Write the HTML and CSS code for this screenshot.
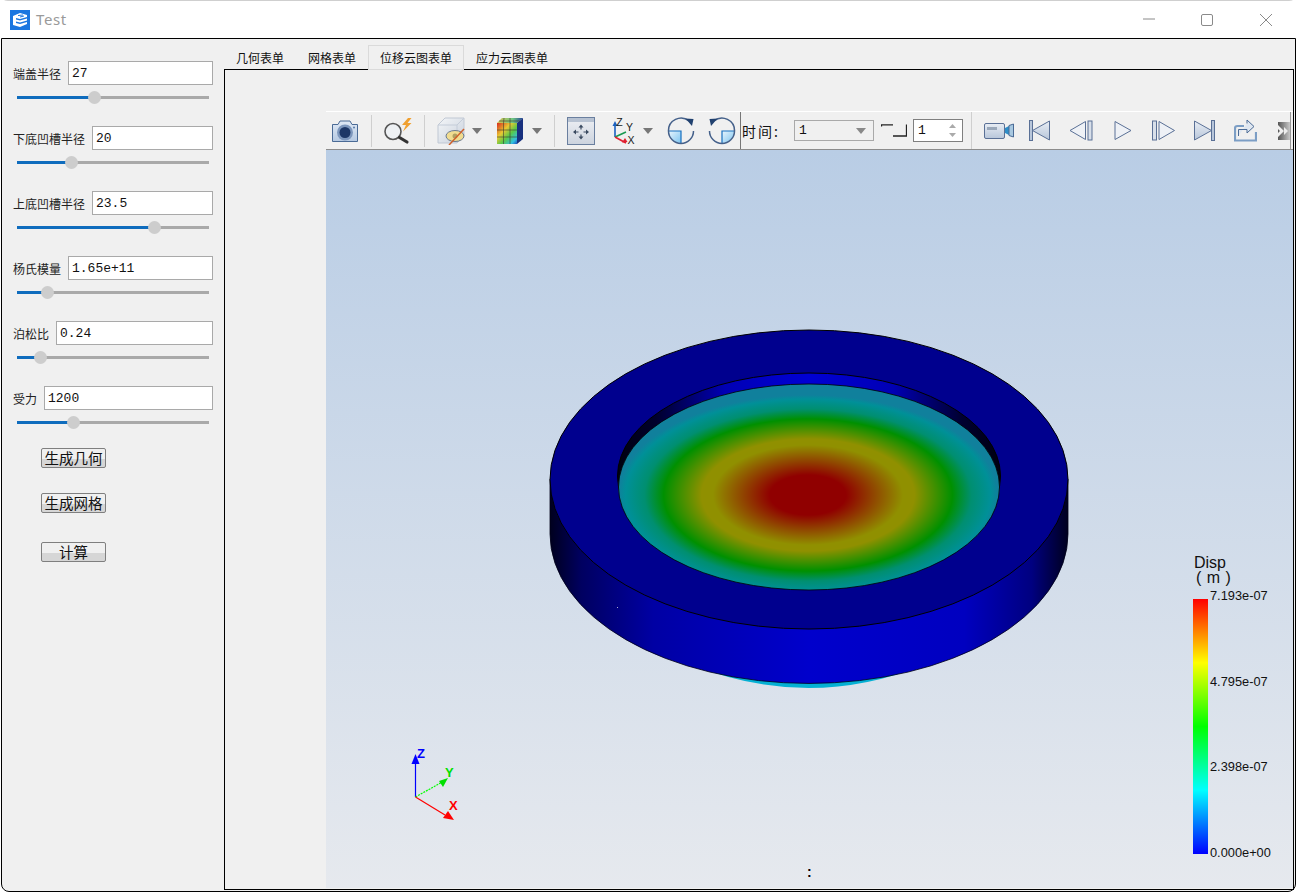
FILE: index.html
```html
<!DOCTYPE html>
<html lang="zh">
<head>
<meta charset="utf-8">
<title>Test</title>
<link rel="stylesheet" href="styles.css">
</head>
<body>
<div class="window">
  <header class="titlebar">
    <svg class="app-icon" width="20" height="20" viewBox="0 0 20 20">
      <rect width="20" height="20" fill="#1a76e0"/>
      <path d="M3 6 L10 3 L17 5 L17 7 L10 9 L6 8 L6 9.5 L10 10.5 L17 8.5 L17 10.5 L10 12.5 L6 11.5 L6 13 L10 14 L17 12 L17 14 L10 17 L3 15 Z" fill="#fff"/>
      <path d="M8 5.5 L13 5 M10 7 L14 6" stroke="#1a76e0" stroke-width="1"/>
    </svg>
    <span class="app-title">Test</span>
    <div class="win-controls">
      <svg class="win-min" width="12" height="2" viewBox="0 0 12 2"><path d="M0 1H12" stroke="#8a8a8a"/></svg>
      <svg class="win-max" width="12" height="12" viewBox="0 0 12 12"><rect x=".5" y=".5" width="11" height="11" rx="1.5" fill="none" stroke="#8a8a8a"/></svg>
      <svg class="win-close" width="12" height="12" viewBox="0 0 12 12"><path d="M0 0L12 12M12 0L0 12" stroke="#8a8a8a"/></svg>
    </div>
  </header>

  <main class="client">
    <aside class="params">
      <div class="fields">
        <div class="field">
          <div class="field-row"><span class="field-label">端盖半径</span><div class="line-edit">27</div></div>
          <div class="slider"><div class="slider-fill" style="width:40.1%"><span class="slider-thumb"></span></div></div>
        </div>
        <div class="field">
          <div class="field-row"><span class="field-label">下底凹槽半径</span><div class="line-edit">20</div></div>
          <div class="slider"><div class="slider-fill" style="width:28.1%"><span class="slider-thumb"></span></div></div>
        </div>
        <div class="field">
          <div class="field-row"><span class="field-label">上底凹槽半径</span><div class="line-edit">23.5</div></div>
          <div class="slider"><div class="slider-fill" style="width:71.4%"><span class="slider-thumb"></span></div></div>
        </div>
        <div class="field">
          <div class="field-row"><span class="field-label">杨氏模量</span><div class="line-edit">1.65e+11</div></div>
          <div class="slider"><div class="slider-fill" style="width:15.6%"><span class="slider-thumb"></span></div></div>
        </div>
        <div class="field">
          <div class="field-row"><span class="field-label">泊松比</span><div class="line-edit">0.24</div></div>
          <div class="slider"><div class="slider-fill" style="width:12%"><span class="slider-thumb"></span></div></div>
        </div>
        <div class="field">
          <div class="field-row"><span class="field-label">受力</span><div class="line-edit">1200</div></div>
          <div class="slider"><div class="slider-fill" style="width:29.2%"><span class="slider-thumb"></span></div></div>
        </div>
      </div>
      <div class="actions">
        <div class="push-btn">生成几何</div>
        <div class="push-btn">生成网格</div>
        <div class="push-btn push-btn-last">计算</div>
      </div>
    </aside>

    <section class="workspace">
      <nav class="tabs">
        <div class="tab">几何表单</div>
        <div class="tab">网格表单</div>
        <div class="tab tab-active">位移云图表单</div>
        <div class="tab">应力云图表单</div>
      </nav>
      <div class="pane">
        <div class="viewer">
          <div class="toolbar">
            <svg class="ic-camera" width="28" height="24" viewBox="0 0 28 24">
              <defs><linearGradient id="camBody" x1="0" y1="0" x2="0" y2="1"><stop offset="0" stop-color="#e0e9f5"/><stop offset="1" stop-color="#b5c9e2"/></linearGradient></defs>
              <path d="M1.5 5.5 H7 L9 2 H19 L21 5.5 H26.500 V22.500 H1.500 Z" fill="url(#camBody)" stroke="#4a6a95" stroke-linejoin="round"/>
              <circle cx="14" cy="13.500" r="8" fill="#7d97bd"/>
              <circle cx="14" cy="13.500" r="5.500" fill="#1d3767"/>
              <circle cx="23" cy="8.500" r="1" fill="#5a7aa5"/>
            </svg>
            <span class="sep sep-a"></span>
            <svg class="ic-zoom" width="28" height="28" viewBox="0 0 28 28">
              <circle cx="9" cy="14.500" r="8" fill="#eef1f4" stroke="#555" stroke-width="1.600"/>
              <path d="M15.500 20.500L23 25" stroke="#333" stroke-width="3.200" stroke-linecap="round"/>
              <path d="M24 1L18 8H22L19 14.500L27.500 6H23.500L27.500 1Z" fill="#f0a030"/>
            </svg>
            <span class="sep sep-b"></span>
            <svg class="ic-hide" width="28" height="28" viewBox="0 0 28 28">
              <defs><linearGradient id="cubeFace" x1="0" y1="0" x2="1" y2="1"><stop offset="0" stop-color="#f4f6f8"/><stop offset="1" stop-color="#c8d0dc"/></linearGradient></defs>
              <path d="M1 8L8 1H27V19L20 26H1Z" fill="url(#cubeFace)" stroke="#c0c8d4"/>
              <path d="M1 8H20V26M20 8L27 1" fill="none" stroke="#c4ccd8"/>
              <ellipse cx="18" cy="19" rx="9" ry="5.500" fill="#f0dc90" stroke="#6a7a90"/>
              <circle cx="18" cy="19" r="2.500" fill="#b0a060"/>
              <path d="M12 28L27 12" stroke="#d0602a" stroke-width="1.500"/>
            </svg>
            <svg class="ic-caret ic-caret-a" width="10" height="6" viewBox="0 0 10 6"><path d="M0 0H10L5 6Z" fill="#777"/></svg>
            <svg class="ic-colorcube" width="28" height="28" viewBox="0 0 28 28">
              <defs>
                <linearGradient id="rainbow" x1="0" y1="0" x2="1" y2="1"><stop offset="0" stop-color="#d92a1e"/><stop offset=".35" stop-color="#e8c832"/><stop offset=".6" stop-color="#58c848"/><stop offset=".85" stop-color="#30c0e0"/><stop offset="1" stop-color="#2050c0"/></linearGradient>
                <linearGradient id="topFace" x1="0" y1="0" x2="1" y2="0"><stop offset="0" stop-color="#d8c050"/><stop offset=".6" stop-color="#70c880"/><stop offset="1" stop-color="#20409a"/></linearGradient>
              </defs>
              <path d="M1 6L6 1H27L21 6Z" fill="url(#topFace)"/>
              <path d="M21 6L27 1V22L21 27Z" fill="#18307e"/>
              <rect x="1" y="6" width="20" height="21" fill="url(#rainbow)"/>
              <path d="M7.500 6V27M14 6V27M1 13H21M1 20H21M8 1L7.500 6M14 1L14 6M3 4H24" stroke="#3a3a30" stroke-width=".6" fill="none"/>
            </svg>
            <svg class="ic-caret ic-caret-b" width="10" height="6" viewBox="0 0 10 6"><path d="M0 0H10L5 6Z" fill="#777"/></svg>
            <span class="sep sep-c"></span>
            <svg class="ic-fit" width="28" height="28" viewBox="0 0 28 28">
              <defs><linearGradient id="fitBg" x1="0" y1="0" x2="0" y2="1"><stop offset="0" stop-color="#eef0f4"/><stop offset="1" stop-color="#ccd3de"/></linearGradient></defs>
              <rect x=".5" y=".5" width="27" height="27" fill="url(#fitBg)" stroke="#6a7f9f"/>
              <rect x="1" y="1" width="26" height="4" fill="#b7c2d2"/>
              <path d="M14 10V12.500M14 17.500V20M8.500 15H11.500M16.500 15H19.500" stroke="#3a4a60" stroke-width="1.200"/>
              <path d="M14 7.500L11.500 10.500H16.500ZM14 22.500L11.500 19.500H16.500ZM6 15L9 12.500V17.500ZM22 15L19 12.500V17.500Z" fill="#3a4a60"/>
            </svg>
            <svg class="ic-axes" width="24" height="30" viewBox="0 0 24 30">
              <path d="M4 21V8" stroke="#1a60c0" stroke-width="1.600"/><path d="M4 5L1.500 10H6.500Z" fill="#1a60c0"/>
              <path d="M4 21L15 16" stroke="#1a9a50" stroke-width="1.600"/><path d="M4 21L15 27" stroke="#e02030" stroke-width="1.600"/>
              <path d="M16.500 26L11 26.500L14 22Z" fill="#e02030"/>
              <text class="axis-tag" x="8.500" y="9.500">Z</text>
              <text class="axis-tag" x="18.500" y="15">Y</text>
              <text class="axis-tag" x="20" y="28">X</text>
            </svg>
            <svg class="ic-caret ic-caret-c" width="10" height="6" viewBox="0 0 10 6"><path d="M0 0H10L5 6Z" fill="#777"/></svg>
            <svg class="ic-rot-a" width="28" height="28" viewBox="0 0 28 28">
              <defs><linearGradient id="rotFill" x1="0" y1="0" x2="1" y2="1"><stop offset="0" stop-color="#e8f5fd"/><stop offset="1" stop-color="#7cc4f0"/></linearGradient></defs>
              <path d="M2 14A12 12 0 0 0 14 26V14Z" fill="url(#rotFill)"/>
              <path d="M2 14H14V26" fill="none" stroke="#1670c0" stroke-width="1.200"/>
              <path d="M22 4A12.500 12.500 0 0 0 1.500 14A12.500 12.500 0 0 0 26.500 14" fill="none" stroke="#44608a" stroke-width="1.500"/>
              <path d="M18.500 1.500L26.500 2L25 9Z" fill="#21416f"/>
            </svg>
            <svg class="ic-rot-b" width="28" height="28" viewBox="0 0 28 28">
              <path d="M14 14H26A12 12 0 0 1 14 26Z" fill="url(#rotFill)"/>
              <path d="M26 14H14V26" fill="none" stroke="#1670c0" stroke-width="1.200"/>
              <path d="M6 4A12.500 12.500 0 0 1 26.500 14A12.500 12.500 0 0 1 1.500 14" fill="none" stroke="#44608a" stroke-width="1.500"/>
              <path d="M9.500 1.500L1.500 2L3 9Z" fill="#21416f"/>
            </svg>
            <span class="sep-strong"></span>
            <span class="time-label">时间:</span>
            <div class="combo"><span>1</span><svg width="10" height="6" viewBox="0 0 10 6"><path d="M0 0H10L5 6Z" fill="#888"/></svg></div>
            <svg class="ic-step" width="26" height="13" viewBox="0 0 26 13"><path d="M.5 2.500V.8H12M12 12H25.500V.5" fill="none" stroke="#222" stroke-width="1.300"/></svg>
            <div class="spin"><span>1</span><svg width="7" height="13" viewBox="0 0 7 13"><path d="M3.500 0L7 4H0ZM0 9H7L3.500 13Z" fill="#aaa"/></svg></div>
            <span class="sep sep-d"></span>
            <div class="media-group">
              <svg class="ic-video" width="30" height="17" viewBox="0 0 30 17">
                <defs><linearGradient id="mediaGrad" x1="0" y1="0" x2="0" y2="1"><stop offset="0" stop-color="#e8edf4"/><stop offset="1" stop-color="#b8c6da"/></linearGradient></defs>
                <rect x=".5" y="1.500" width="20" height="15" rx="1.500" fill="url(#mediaGrad)" stroke="#5a7096"/>
                <rect x="3" y="5" width="10" height="3" fill="#9aa8ba"/>
                <path d="M21 6L25 4V13L21 11Z" fill="#2e8ec8"/><path d="M25 3.500L29.500 2V15L25 13.500Z" fill="#a8c8e0" stroke="#4a6a95"/>
              </svg>
              <svg class="ic-first" width="21" height="21" viewBox="0 0 21 21"><rect x=".5" y=".5" width="3" height="20" fill="#b8c6da" stroke="#5a7096"/><path d="M3.500 10.500L20.500 1V20Z" fill="url(#mediaGrad)" stroke="#5a7096"/></svg>
              <svg class="ic-prev" width="24" height="21" viewBox="0 0 24 21"><path d="M1 10.500L16.500 1.500V19.500Z" fill="#eef1f6" stroke="#5a7096"/><rect x="19" y="1" width="4" height="19" fill="#d8dfe9" stroke="#5a7096"/></svg>
              <svg class="ic-play" width="18" height="21" viewBox="0 0 18 21"><path d="M1 1.500L17 10.500L1 19.500Z" fill="#eef1f6" stroke="#5a7096"/></svg>
              <svg class="ic-next" width="23" height="21" viewBox="0 0 23 21"><rect x=".5" y="1" width="4" height="19" fill="#d8dfe9" stroke="#5a7096"/><path d="M7 1.500L22.500 10.500L7 19.500Z" fill="#eef1f6" stroke="#5a7096"/></svg>
              <svg class="ic-last" width="21" height="21" viewBox="0 0 21 21"><path d="M17.500 10.500L.5 1V20Z" fill="url(#mediaGrad)" stroke="#5a7096"/><rect x="17.500" y=".5" width="3" height="20" fill="#b8c6da" stroke="#5a7096"/></svg>
              <svg class="ic-export" width="23" height="23" viewBox="0 0 23 23"><path d="M10 7H3.500Q1 7 1 9.500V21.500H22V13" fill="none" stroke="#7c9ec5" stroke-width="2.200"/><path d="M4.500 17V10.500H13V14L20 7.500L13 1V4.500" fill="#dfe7f1" stroke="#4a6a95"/></svg>
              <svg class="ic-more" width="12" height="18" viewBox="0 0 12 18">
                <defs><linearGradient id="moreGrad" x1="0" y1="0" x2="1" y2="0"><stop offset="0" stop-color="#555"/><stop offset="1" stop-color="#c8c8c8"/></linearGradient></defs>
                <rect width="12" height="18" fill="url(#moreGrad)"/><path d="M0 3L6 9L0 15V11L2 9L0 7Z" fill="#f0f0f0"/><path d="M6 5L10 9L6 13V5Z" fill="#eee"/>
              </svg>
            </div>
          </div>

          <div class="view3d">
            <svg class="scene" width="967" height="738" viewBox="326 150 967 738">
              <defs>
                <linearGradient id="sideGrad" x1="0" y1="0" x2="1" y2="0">
                  <stop offset="0" stop-color="#00001e"/><stop offset=".06" stop-color="#000060"/><stop offset=".2" stop-color="#0000a4"/>
                  <stop offset=".5" stop-color="#0000cc"/><stop offset=".8" stop-color="#0000c0"/><stop offset=".93" stop-color="#000080"/><stop offset="1" stop-color="#00001e"/>
                </linearGradient>
                <linearGradient id="wallGrad" x1="0" y1="0" x2="1" y2="0">
                  <stop offset="0" stop-color="#000010"/><stop offset=".1" stop-color="#00002c"/><stop offset=".28" stop-color="#0000b4"/>
                  <stop offset=".5" stop-color="#0000d4"/><stop offset=".72" stop-color="#0000b4"/><stop offset=".9" stop-color="#000030"/><stop offset="1" stop-color="#000010"/>
                </linearGradient>
                <radialGradient id="floorGrad" gradientUnits="userSpaceOnUse" cx="0" cy="0" r="1" gradientTransform="translate(808 495) scale(190 100)">
                  <stop offset="0" stop-color="#900000"/><stop offset=".2" stop-color="#900000"/><stop offset=".5" stop-color="#909000"/><stop offset=".56" stop-color="#909000"/>
                  <stop offset=".76" stop-color="#009000"/><stop offset=".86" stop-color="#008f70"/><stop offset=".96" stop-color="#009098"/><stop offset="1" stop-color="#10809c"/>
                </radialGradient>
              </defs>
              <path d="M690 664Q809 712 926 664Z" fill="#04b0d4"/>
              <path d="M550 479V534A259 149.500 0 0 0 1068 534V479Z" fill="url(#sideGrad)" stroke="#000018" stroke-width=".8"/>
              <ellipse cx="809" cy="479.500" rx="259" ry="149.500" fill="#00008e" stroke="#000" stroke-width="1"/>
              <ellipse cx="809" cy="476" rx="191.500" ry="103" fill="url(#wallGrad)" stroke="#000" stroke-width="1"/>
              <ellipse cx="809" cy="487" rx="190.500" ry="103" fill="url(#floorGrad)" stroke="#000" stroke-width=".8"/>
              <rect x="617" y="607" width="1" height="1" fill="#aac"/>
              <path d="M415.500 797V760" stroke="#0000ff" stroke-width="1.200"/>
              <path d="M415.500 754L411.500 764H419.500Z" fill="#0000ff"/>
              <path d="M415.500 797L444 781" stroke="#00ff00" stroke-width="1.200" stroke-dasharray="2 1"/>
              <path d="M448 778L439 781L443 787Z" fill="#00e000"/>
              <path d="M415.500 797L445 815" stroke="#ff0000" stroke-width="1.200"/>
              <path d="M454 820L448 811L443 818Z" fill="#ff0000"/>
              <text class="triad triad-z" x="417" y="758">Z</text>
              <text class="triad triad-y" x="445" y="777">Y</text>
              <text class="triad triad-x" x="449" y="810">X</text>
            </svg>
            <div class="legend">
              <div class="legend-title">Disp<br><span class="legend-unit">( m )</span></div>
              <div class="legend-scale">
                <div class="legend-bar"></div>
                <div class="legend-ticks">
                  <span>7.193e-07</span><span>4.795e-07</span><span>2.398e-07</span><span>0.000e+00</span>
                </div>
              </div>
            </div>
            <div class="view-caption">:</div>
          </div>
        </div>
      </div>
    </section>
  </main>
</div>
</body>
</html>
```

FILE: styles.css
```css
* { box-sizing: border-box; }
html, body { margin: 0; padding: 0; background: #fff; }
body { width: 1297px; height: 893px; overflow: hidden; font-family: "Noto Sans CJK SC", "Liberation Sans", sans-serif; color: #111; }

.window { width: 1297px; height: 893px; display: flex; flex-direction: column; background: #fff; border-top: 1px solid #cfcfcf; border-radius: 8px 8px 0 0; }

.titlebar { height: 37px; flex: none; display: flex; align-items: center; padding-left: 10px; background: #fff; }
.app-icon { flex: none; }
.app-title { margin: 0 0 2px 6px; font: 15px "Noto Sans", "Liberation Sans", sans-serif; letter-spacing: .6px; color: #9a9a9a; }
.win-controls { margin-left: auto; display: flex; align-items: center; padding-right: 25px; }
.win-min { margin-bottom: 2px; }
.win-max { margin-left: 46px; }
.win-close { margin-left: 47px; }

.client { height: 854px; flex: none; margin-left: 1px; width: 1295px; display: flex; border: 1px solid #000; border-radius: 0 0 8px 8px; background: #f0f0f0; }

.params { width: 222px; flex: none; padding: 22px 11px 0; }
.fields { display: flex; flex-direction: column; gap: 22px; }
.field-row { display: flex; align-items: center; gap: 7px; height: 24px; }
.field-label { flex: none; font-size: 12px; color: #222; }
.line-edit { flex: 1; height: 24px; padding-left: 3px; background: #fff; border: 1px solid #a9a9a9; font: 13px/24px "Liberation Mono", monospace; color: #111; }

.slider { position: relative; height: 3px; margin: 11px 4px 5px; background: #a9a9a9; }
.slider-fill { position: relative; height: 3px; background: #0f6cbd; }
.slider-thumb { position: absolute; right: -7px; top: -5px; width: 13px; height: 13px; border-radius: 50%; background: #cdcdcd; }

.actions { margin: 19px 0 0 28px; display: flex; flex-direction: column; gap: 25px; }
.push-btn { width: 65px; height: 20px; border: 1px solid #7f7f7f; border-radius: 2px; background: linear-gradient(#f0f0f0 0 55%, #d6d6d6 55%); font-size: 14.500px; line-height: 18px; text-align: center; white-space: nowrap; }
.push-btn-last { margin-top: 4px; }

.workspace { flex: 1; min-width: 0; display: flex; flex-direction: column; margin: 0 1px 1px 0; }
.tabs { height: 30px; flex: none; display: flex; align-items: flex-end; }
.tab { height: 24px; padding: 0 12px; font-size: 12px; line-height: 25px; white-space: nowrap; }
.tab-active { position: relative; z-index: 1; height: 25px; margin-bottom: -1px; background: #f0f0f0; border: 1px solid #dadada; padding: 0 11px; line-height: 24px; }

.pane { flex: 1; min-height: 0; border: 1px solid #000; padding: 41px 0 1px 101px; background: #f0f0f0; }
.viewer { height: 100%; display: flex; flex-direction: column; }

.toolbar { height: 39px; flex: none; display: flex; align-items: center; border-top: 1px solid #fff; border-bottom: 1px solid #8c8c8c; background: #f0f0f0; }
.toolbar > svg { flex: none; }
.sep { flex: none; width: 1px; height: 32px; background: #cfcfcf; }
.sep-strong { flex: none; align-self: stretch; width: 1px; margin-left: 4px; background: #777; }
.ic-camera { margin-left: 5px; }
.sep-a { margin-left: 12px; }
.ic-zoom { margin-left: 12px; }
.sep-b { margin-left: 12px; }
.ic-hide { margin-left: 12px; }
.ic-caret-a { margin-left: 7px; }
.ic-colorcube { margin-left: 14px; }
.ic-caret-b { margin-left: 8px; }
.sep-c { margin-left: 12px; }
.ic-fit { margin-left: 12px; }
.ic-axes { margin-left: 16px; }
.axis-tag { font: 10.500px "Liberation Sans", sans-serif; fill: #222; text-anchor: middle; }
.ic-caret-c { margin-left: 8px; }
.ic-rot-a { margin-left: 14px; }
.ic-rot-b { margin-left: 13px; }
.time-label { flex: none; width: 52px; margin-left: 1px; font-size: 14px; letter-spacing: 2px; white-space: nowrap; }
.combo { flex: none; width: 80px; height: 21px; padding: 0 7px 0 4px; display: flex; align-items: center; justify-content: space-between; border: 1px solid #a9a9a9; font: 13px "Liberation Mono", monospace; }
.ic-step { margin-left: 7px; }
.spin { flex: none; width: 50px; height: 23px; margin-left: 6px; padding: 0 6px 0 4px; display: flex; align-items: center; justify-content: space-between; background: #fff; border: 1px solid #7f7f7f; font: 13px "Liberation Mono", monospace; }
.sep-d { margin-left: 8px; height: 37px; }
.media-group { flex: 1; align-self: stretch; margin: 0 2px 0 8px; display: flex; align-items: center; border-right: 1px solid #999; }
.media-group svg { flex: none; }
.ic-video { margin-left: 4px; }
.ic-first { margin-left: 15px; }
.ic-prev { margin-left: 19px; }
.ic-play { margin-left: 21px; }
.ic-next { margin-left: 20px; }
.ic-last { margin-left: 19px; }
.ic-export { margin-left: 19px; }
.ic-more { margin-left: 21px; }

.view3d { position: relative; flex: 1; min-height: 0; overflow: hidden; background: linear-gradient(#b9cde5, #e6e9ee); }
.scene { display: block; }
.triad { font: bold 13px "Liberation Sans", sans-serif; }
.triad-z { fill: #0000ff; }
.triad-y { fill: #00e000; }
.triad-x { fill: #ff0000; }

.legend { position: absolute; left: 867px; top: 405px; color: #111; font-family: "Liberation Sans", sans-serif; }
.legend-title { font-size: 16px; line-height: 15px; margin-left: 1px; height: 44px; }
.legend-unit { margin-left: 2px; word-spacing: 1px; }
.legend-scale { display: flex; }
.legend-bar { flex: none; width: 15px; height: 255px; background: linear-gradient(#ff0000, #ffff00 25%, #00ff00 50%, #00ffff 75%, #0000ff); }
.legend-ticks { height: 273px; margin: -11px 0 0 2px; display: flex; flex-direction: column; justify-content: space-between; font-size: 12.800px; line-height: 16px; white-space: nowrap; }

.view-caption { position: absolute; left: 481px; top: 714px; font: bold 14px "Liberation Sans", sans-serif; color: #000; }
```
